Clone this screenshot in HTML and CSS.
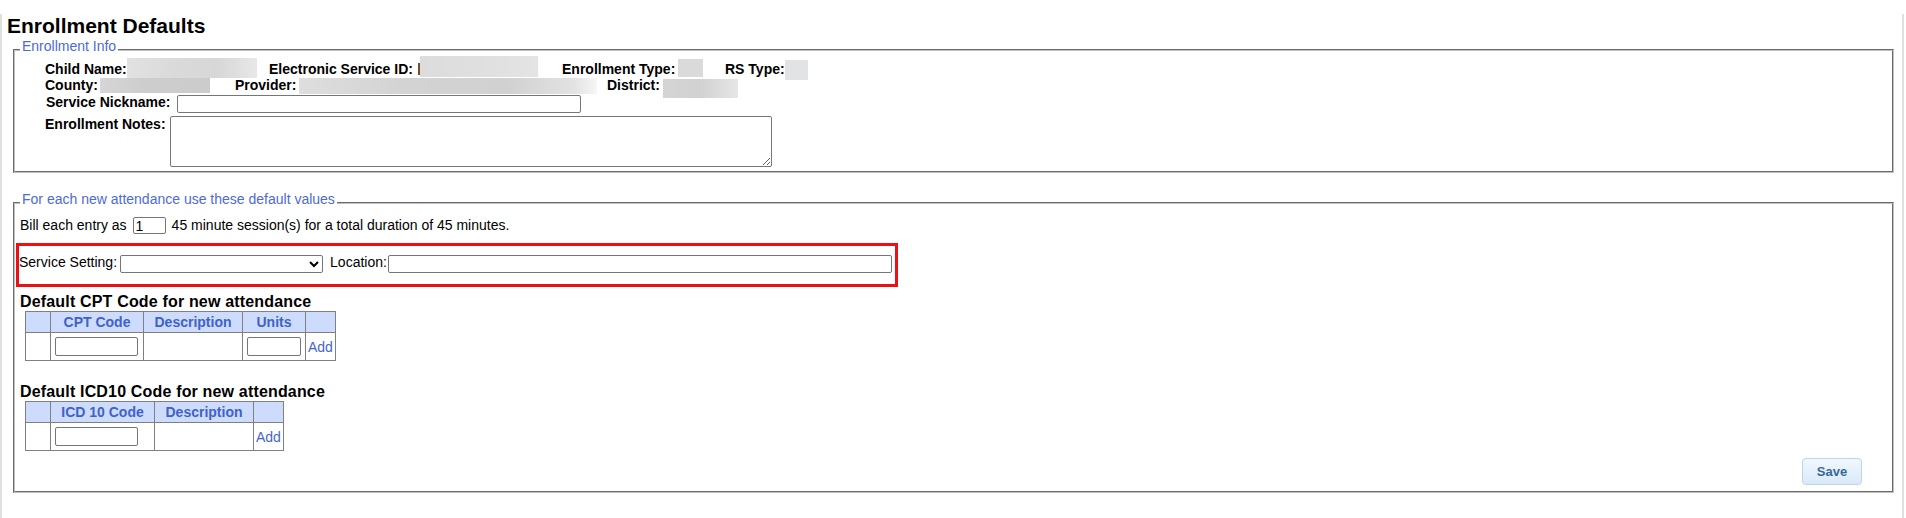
FILE: index.html
```html
<!DOCTYPE html>
<html lang="en">
<head>
<meta charset="utf-8">
<title>Enrollment Defaults</title>
<link rel="stylesheet" href="styles.css">
</head>
<body>
<div class="page">
  <h1 class="title">Enrollment Defaults</h1>

  <fieldset class="box">
    <legend class="box-legend">Enrollment Info</legend>
    <div class="info">
      <div class="info-row">
        <span class="pair pair-child"><span class="lbl lbl-child">Child Name:</span><span class="redact r-child"></span></span>
        <span class="pair pair-esid"><span class="lbl lbl-esid">Electronic Service ID:</span><span class="sliver"></span><span class="redact r-esid"></span></span>
        <span class="pair pair-etype"><span class="lbl lbl-etype">Enrollment Type:</span><span class="redact r-etype"></span></span>
        <span class="pair"><span class="lbl lbl-rs">RS Type:</span><span class="redact r-rs"></span></span>
      </div>
      <div class="info-row">
        <span class="pair pair-county"><span class="lbl lbl-county">County:</span><span class="redact r-county"></span></span>
        <span class="pair pair-provider"><span class="lbl lbl-provider">Provider:</span><span class="redact r-provider"></span></span>
        <span class="pair"><span class="lbl lbl-district">District:</span><span class="redact r-district"></span></span>
      </div>
      <div class="form-row row-nick">
        <label class="lbl lbl-nick" for="nick">Service Nickname:</label>
        <input id="nick" class="field field-nick" type="text">
      </div>
      <div class="form-row row-notes">
        <label class="lbl" for="notes">Enrollment Notes:</label>
        <textarea id="notes" class="notes"></textarea>
      </div>
    </div>
  </fieldset>

  <fieldset class="box box-defaults">
    <legend class="box-legend">For each new attendance use these default values</legend>
    <div class="defaults">
      <div class="bill-row">
        <span>Bill each entry as</span>
        <input class="field field-count" type="text" value="1">
        <span class="bill-tail">45 minute session(s) for a total duration of 45 minutes.</span>
      </div>

      <div class="setting-box">
        <label class="plain" for="setting">Service Setting:</label>
        <select id="setting" class="select-setting"><option></option></select>
        <label class="plain loc-label" for="loc">Location:</label>
        <input id="loc" class="field field-loc" type="text">
      </div>

      <h2 class="sec-title">Default CPT Code for new attendance</h2>
      <table class="grid-table">
        <thead>
          <tr>
            <th class="c-blank"></th>
            <th class="c-code">CPT Code</th>
            <th class="c-desc">Description</th>
            <th class="c-units">Units</th>
            <th class="c-add"></th>
          </tr>
        </thead>
        <tbody>
          <tr>
            <td></td>
            <td class="in-cell"><input class="field field-code" type="text"></td>
            <td></td>
            <td class="in-cell"><input class="field field-units" type="text"></td>
            <td class="add"><a href="#" class="add-link">Add</a></td>
          </tr>
        </tbody>
      </table>

      <h2 class="sec-title sec-icd">Default ICD10 Code for new attendance</h2>
      <table class="grid-table">
        <thead>
          <tr>
            <th class="c-blank"></th>
            <th class="c-icd">ICD 10 Code</th>
            <th class="c-desc">Description</th>
            <th class="c-add"></th>
          </tr>
        </thead>
        <tbody>
          <tr>
            <td></td>
            <td class="in-cell"><input class="field field-code" type="text"></td>
            <td></td>
            <td class="add"><a href="#" class="add-link">Add</a></td>
          </tr>
        </tbody>
      </table>

      <div class="actions">
        <button type="button" class="save-btn">Save</button>
      </div>
    </div>
  </fieldset>
</div>
</body>
</html>
```

FILE: styles.css
```css
html, body {
  margin: 0;
  background: #fff;
}

body {
  font-family: "Liberation Sans", Arial, sans-serif;
  font-size: 14px;
  color: #000;
}

.page {
  box-sizing: border-box;
  min-height: 518px;
  margin-right: 2px;
  padding: 0 8px 0 5px;
  border-left: 2px solid #dfdfdf;
  border-right: 2px solid #dfdfdf;
}

.title {
  margin: 14px 0 0 0;
  font-size: 21px;
  line-height: 24px;
  font-weight: bold;
}

.box {
  margin: 0 0 0 6px;
  padding: 0;
  border: 2px groove #c0c0c0;
  min-width: 0;
}

.box-defaults {
  margin-top: 18px;
}

.box-legend {
  margin-left: 5px;
  padding: 0 2px 8px;
  font-size: 14px;
  line-height: 16px;
  color: #4d6bd6;
}

/* Enrollment info */
.info {
  margin-top: -1px;
  padding: 0 0 4px 30px;
}

.info-row {
  display: flex;
  align-items: flex-start;
  height: 16px;
  line-height: 16px;
}

.pair {
  display: flex;
  flex: none;
  align-items: flex-start;
}

.pair-child { width: 224px; }
.pair-esid { width: 293px; }
.pair-etype { width: 163px; }
.pair-county { width: 190px; }
.pair-provider { width: 372px; }

.lbl {
  flex: none;
  font-weight: bold;
  white-space: nowrap;
  line-height: 16px;
}

.lbl-child { width: 82px; }
.lbl-esid { width: 149px; }
.lbl-etype { width: 116px; }
.lbl-rs { width: 60px; }
.lbl-county { width: 55px; }
.lbl-provider { width: 64px; }
.lbl-district { width: 56px; }

.redact {
  flex: none;
  display: block;
}

.r-child {
  width: 130px;
  height: 20px;
  margin-top: -3px;
  background: linear-gradient(90deg, #e2e2e2 0%, #dadada 35%, #d7d7d7 70%, #e8e8e8 100%);
}

.sliver {
  flex: none;
  width: 2px;
  height: 12px;
  margin-top: 2px;
  background: #7b4f24;
}

.r-esid {
  width: 118px;
  height: 21px;
  margin-top: -5px;
  background: linear-gradient(90deg, #dcdcdc 0%, #e0e0e0 60%, #e4e4e4 100%);
}

.r-etype {
  width: 25px;
  height: 18px;
  margin-top: -2px;
  background: #dadada;
}

.r-rs {
  width: 23px;
  height: 20px;
  margin-top: -1px;
  background: #e1e3e5;
}

.r-county {
  width: 110px;
  height: 15px;
  margin-top: 1px;
  background: linear-gradient(90deg, #d6d6d6 0%, #cdcdcd 40%, #cccccc 100%);
}

.r-provider {
  width: 298px;
  height: 16px;
  margin-top: 1px;
  background: linear-gradient(90deg, #dedede 0%, #d3d3d3 35%, #d1d1d1 70%, #e2e2e2 92%, #f6f6f6 100%);
}

.r-district {
  width: 75px;
  height: 19px;
  margin-top: 2px;
  background: linear-gradient(90deg, #d4d4d4 0%, #d2d2d2 50%, #e6e6e6 100%);
}

.form-row {
  display: flex;
  align-items: flex-start;
}

.row-nick {
  margin-top: 1px;
}

.lbl-nick {
  margin-left: 1px;
}

.row-notes {
  margin-top: 3px;
}

.field {
  box-sizing: border-box;
  margin: 0;
  padding: 1px 2px;
  border: 1px solid #767676;
  border-radius: 2px;
  font-family: "Liberation Sans", Arial, sans-serif;
  font-size: 14px;
  background: #fff;
  color: #000;
}

.field-nick {
  width: 404px;
  height: 18px;
  margin: 1px 0 0 6px;
}

.notes {
  box-sizing: border-box;
  width: 602px;
  height: 51px;
  margin: 0 0 0 4px;
  padding: 2px;
  border: 1px solid #767676;
  border-radius: 2px;
  font-family: "Liberation Sans", Arial, sans-serif;
  font-size: 13px;
}

/* Defaults section */
.defaults {
  padding: 2px 30px 6px 5px;
}

.bill-row {
  display: flex;
  align-items: flex-start;
  line-height: 16px;
}

.field-count {
  width: 33px;
  height: 17px;
  margin-left: 6px;
  padding: 0 2px;
  line-height: 15px;
}

.bill-tail {
  margin-left: 6px;
}

.setting-box {
  display: flex;
  align-items: flex-start;
  width: fit-content;
  margin: 9px 0 0 -4px;
  padding: 8px 3px 11px 0;
  border: 3px solid #ee0f14;
  line-height: 16px;
}

.plain {
  white-space: nowrap;
}

.select-setting {
  box-sizing: border-box;
  width: 203px;
  height: 18px;
  margin: 1px 0 0 3px;
  padding: 0 2px;
  border: 1px solid #767676;
  border-radius: 2px;
  background: #fff;
  font-family: "Liberation Sans", Arial, sans-serif;
  font-size: 13px;
}

.loc-label {
  margin-left: 7px;
}

.field-loc {
  width: 504px;
  height: 18px;
  margin: 1px 0 0 1px;
}

.sec-title {
  margin: 5px 0 0 0;
  font-size: 16px;
  line-height: 19px;
  font-weight: bold;
  letter-spacing: 0.17px;
}

.sec-icd {
  margin-top: 21px;
}

.grid-table {
  margin-left: 5px;
  border-collapse: separate;
  border-spacing: 0;
  table-layout: fixed;
  border-top: 1px solid #808080;
  border-left: 1px solid #808080;
}

.grid-table th,
.grid-table td {
  box-sizing: border-box;
  padding: 0;
  border-right: 1px solid #808080;
  border-bottom: 1px solid #808080;
}

.grid-table th {
  height: 21px;
  background: #cddcfc;
  color: #3f62c9;
  font-weight: bold;
  font-size: 14px;
  line-height: 16px;
  text-align: center;
  vertical-align: middle;
}

.grid-table td {
  height: 28px;
  text-align: left;
  vertical-align: middle;
}

.c-blank { width: 25px; }
.c-code { width: 93px; }
.c-icd { width: 104px; }
.c-desc { width: 99px; }
.c-units { width: 63px; }
.c-add { width: 30px; }

.grid-table td.in-cell {
  padding-left: 4px;
}

.grid-table td.add {
  padding-left: 2px;
}

.field-code {
  width: 83px;
  height: 19px;
  vertical-align: middle;
}

.field-units {
  width: 54px;
  height: 19px;
  vertical-align: middle;
}

.add-link {
  color: #4466cc;
  text-decoration: none;
}

.actions {
  display: flex;
  justify-content: flex-end;
  margin-top: 7px;
}

.save-btn {
  box-sizing: border-box;
  width: 60px;
  height: 27px;
  margin: 0;
  padding: 0;
  border: 1px solid #bcd5ec;
  border-radius: 4px;
  background: linear-gradient(180deg, #f1f7fd 0%, #e6f0fb 50%, #d9e9fa 100%);
  color: #3a689b;
  font-family: "Liberation Sans", Arial, sans-serif;
  font-size: 13px;
  font-weight: bold;
}
```
